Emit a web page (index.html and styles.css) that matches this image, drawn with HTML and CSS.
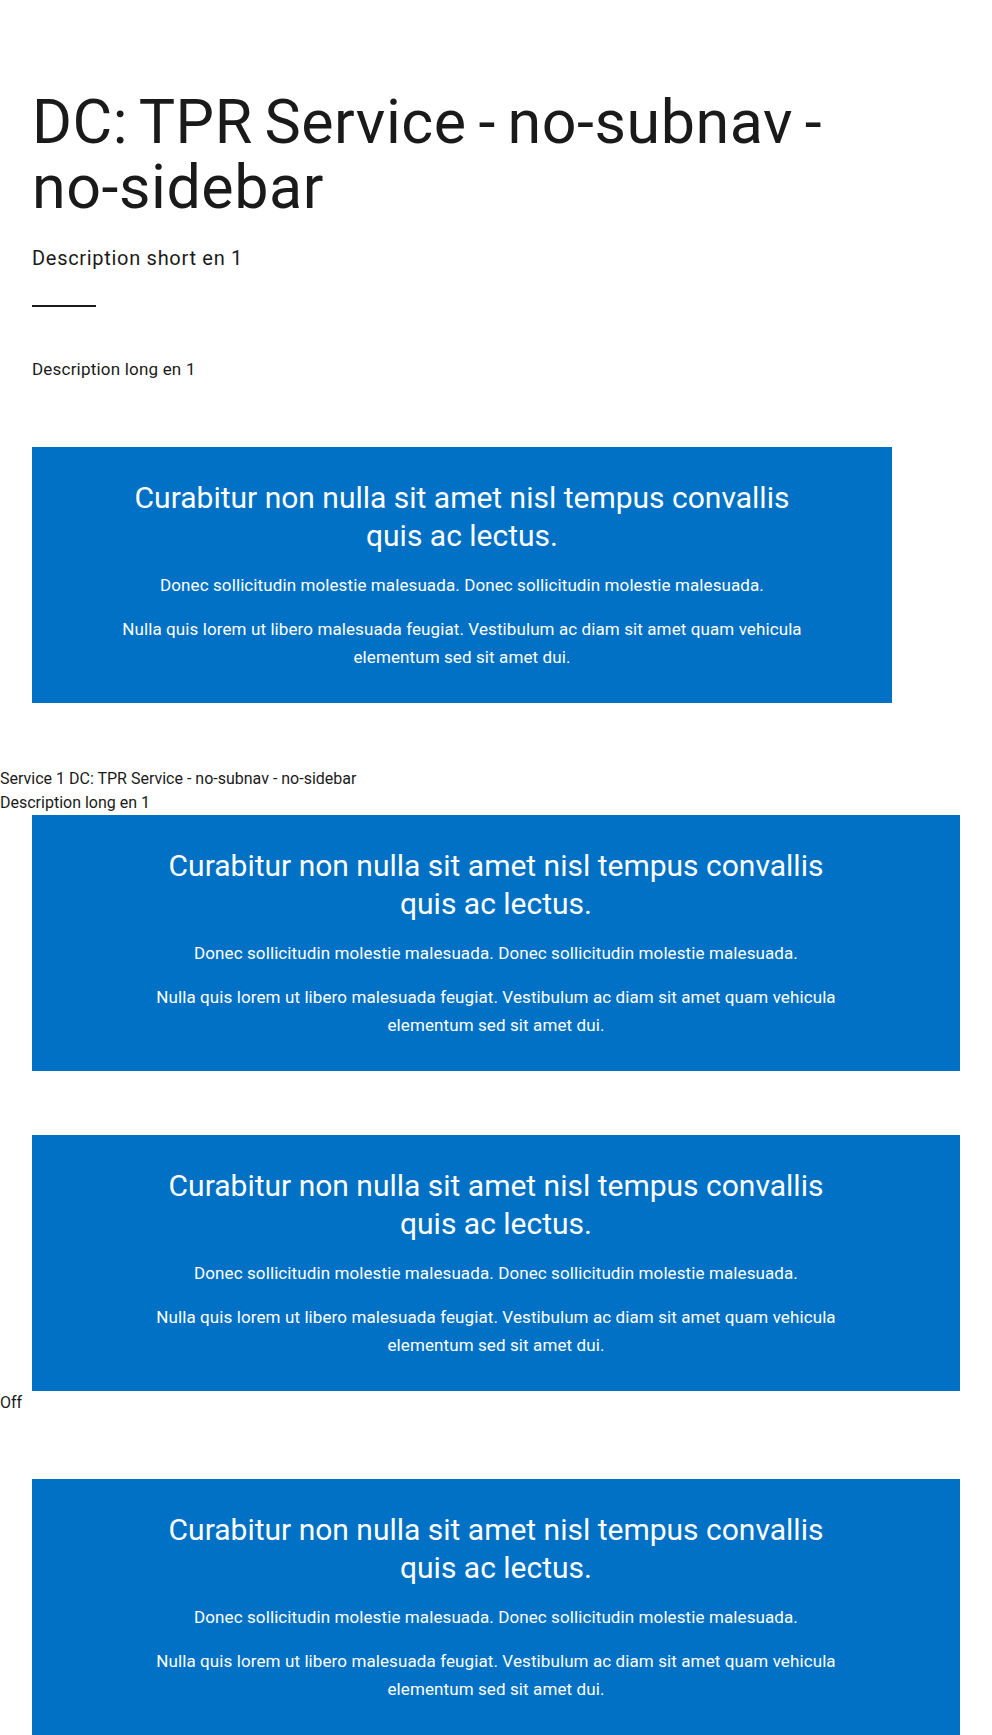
FILE: index.html
```html
<!DOCTYPE html>
<html lang="en">
<head>
<meta charset="utf-8">
<title>DC: TPR Service - no-subnav - no-sidebar</title>
<link rel="stylesheet" href="styles.css">
</head>
<body>
<main class="page">
  <section class="intro">
    <h1 class="intro-title">DC: TPR Service - no-subnav - <span class="nowrap">no-sidebar</span></h1>
    <p class="intro-short">Description short en 1</p>
    <hr class="intro-rule">
    <p class="intro-long">Description long en 1</p>
    <div class="promo promo-narrow">
      <h2 class="promo-title">Curabitur non nulla sit amet nisl tempus convallis quis ac lectus.</h2>
      <p class="promo-text">Donec sollicitudin molestie malesuada. Donec sollicitudin molestie malesuada.</p>
      <p class="promo-text">Nulla quis lorem ut libero malesuada feugiat. Vestibulum ac diam sit amet quam vehicula elementum sed sit amet dui.</p>
    </div>
  </section>

  <section class="service">
    <div class="service-line">Service 1 DC: TPR Service - no-subnav - no-sidebar</div>
    <div class="service-line">Description long en 1</div>
    <div class="promo">
      <h2 class="promo-title">Curabitur non nulla sit amet nisl tempus convallis quis ac lectus.</h2>
      <p class="promo-text">Donec sollicitudin molestie malesuada. Donec sollicitudin molestie malesuada.</p>
      <p class="promo-text">Nulla quis lorem ut libero malesuada feugiat. Vestibulum ac diam sit amet quam vehicula elementum sed sit amet dui.</p>
    </div>
    <div class="promo promo-spaced">
      <h2 class="promo-title">Curabitur non nulla sit amet nisl tempus convallis quis ac lectus.</h2>
      <p class="promo-text">Donec sollicitudin molestie malesuada. Donec sollicitudin molestie malesuada.</p>
      <p class="promo-text">Nulla quis lorem ut libero malesuada feugiat. Vestibulum ac diam sit amet quam vehicula elementum sed sit amet dui.</p>
    </div>
    <div class="service-line">Off</div>
    <div class="promo promo-spaced">
      <h2 class="promo-title">Curabitur non nulla sit amet nisl tempus convallis quis ac lectus.</h2>
      <p class="promo-text">Donec sollicitudin molestie malesuada. Donec sollicitudin molestie malesuada.</p>
      <p class="promo-text">Nulla quis lorem ut libero malesuada feugiat. Vestibulum ac diam sit amet quam vehicula elementum sed sit amet dui.</p>
    </div>
  </section>
</main>
</body>
</html>
```

FILE: styles.css
```css
* { box-sizing: border-box; }

html, body {
  margin: 0;
  padding: 0;
  background: #ffffff;
}

body {
  font-family: Roboto, "Liberation Sans", Arial, sans-serif;
  color: #1a1a1a;
  font-size: 16px;
  line-height: 24px;
}

.page {
  display: block;
}

.intro {
  padding: 90px 32px 0;
  max-width: 924px;
}

.intro-title {
  margin: 0;
  font-size: 61px;
  line-height: 65px;
  font-weight: 400;
  letter-spacing: 0.55px;
  word-spacing: -4px;
  max-width: 860px;
}

.nowrap {
  white-space: nowrap;
}

.intro-short {
  margin: 24px 0 0;
  font-size: 20px;
  line-height: 28px;
  letter-spacing: 0.7px;
}

.intro-rule {
  margin: 33px 0 0;
  width: 64px;
  height: 2px;
  border: 0;
  background: #1a1a1a;
}

.intro-long {
  margin: 50px 0 0;
  font-size: 17px;
  line-height: 24px;
  letter-spacing: 0.2px;
}

.promo {
  background: #0071c5;
  color: #ffffff;
  padding: 32px;
  height: 256px;
  display: flex;
  flex-direction: column;
  align-items: center;
  text-align: center;
  gap: 16px;
  margin: 0 32px;
}

.intro .promo {
  margin: 66px 0 0;
}

.promo-narrow {
  width: 860px;
}

.promo-spaced {
  margin-top: 64px;
}

.promo-title {
  margin: 0;
  max-width: 700px;
  font-size: 30px;
  line-height: 38px;
  font-weight: 400;
  letter-spacing: 0;
}

.promo-text {
  margin: 0;
  max-width: 720px;
  font-size: 17px;
  line-height: 28px;
  letter-spacing: 0.1px;
}

.service {
  padding-top: 64px;
  padding-bottom: 64px;
}

.service-line {
  font-size: 16px;
  line-height: 24px;
  letter-spacing: 0;
}
```
